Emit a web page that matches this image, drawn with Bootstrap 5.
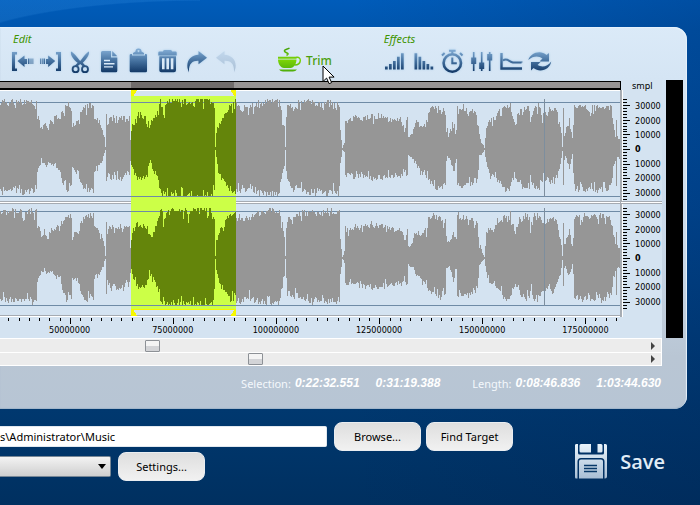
<!DOCTYPE html>
<html lang="en">
<head>
<meta charset="utf-8">
<meta name="viewport" content="width=device-width, initial-scale=1">
<title>Audio editor</title>
<link href="https://cdn.jsdelivr.net/npm/bootstrap@5.3.0/dist/css/bootstrap.min.css" rel="stylesheet">
<style>
body{min-height:100vh;padding-top:27px;font-family:"Noto Sans","Open Sans",sans-serif;font-size:11px;line-height:14px;color:#000;overflow-x:hidden;
 background:radial-gradient(ellipse 260px 60px at 200px 60px,transparent 98%,rgba(70,160,240,.18) 100%) 0 0/200px 27px no-repeat,
 linear-gradient(90deg,transparent 50%,rgba(0,30,80,.22)),linear-gradient(#005cba 0,#0056ae 30px,#004a98 200px,#00386f 410px,#003060 505px)}
.editor{margin-right:13px;border-radius:0 13px 13px 0;background:linear-gradient(#dbeaf8 0,#d5e5f4 50px,#c9d8e8 220px,#b9c6d4 330px,#b7c5d4 100%);box-shadow:inset -1px 1px 1px #e6f2fc,inset 0 -1px 1px #9fb4c9}
.tools{height:53px;padding-left:7px}
.tool-group{padding-top:4px}
.group-title{font-style:italic;color:#3f9400;line-height:16px;margin-left:6px;margin-bottom:1px}
.group-title.fx{margin-left:4px}
.tool{width:29px;height:28px;padding:0;border:0;background:none;line-height:0}
.tool svg{width:29px;height:28px;display:block;overflow:visible;filter:drop-shadow(0 0 1px #a9cdea)}
.trim{margin:19px 48px 0 37px;padding:0;border:0;background:none;color:#4b9f0c;font-size:12px;line-height:16px;font-weight:500;gap:3px;height:30px}
.surface{background:#d4e3f1;margin-right:4px}
.meter{width:17px;background:#000;margin-right:4px}
.overview{height:9px;margin-top:1px;background:#979494;border:solid #000;border-width:1px 1px 2px 0}
.overview svg,.wave,.axis svg{display:block;width:100%}
.scale{width:41px}
.scale-unit{height:10px;font-size:9px;line-height:12px;padding-left:11px}
.numbers{font-family:"DejaVu Sans Condensed","Noto Sans",sans-serif;font-size:9px;line-height:12px}
.wave{height:227px}
.scale-body{height:227px;background:linear-gradient(90deg,#a8aeb5 1px,#fff 1px,#fff 2px,transparent 2px);padding-top:9px}
.scale-channel{height:101px;padding-left:2px}
.scale-channel svg{width:9px;height:101px;display:block}
.scale-nums{display:grid;grid-template-rows:repeat(7,1fr);align-items:center;padding-left:3px}
.scale-nums :nth-child(4){font-weight:600}
.scale-split{margin:1px 0 4px;border:solid #a5abb2;border-width:1px 0;background:#fff;height:3px}
.axis{height:21px}
.axis-nums{display:grid;grid-template-columns:18fr repeat(6,103fr) 25fr;text-align:center;line-height:12px}
.scrolls{margin-right:25px;background:#ececec;border:1px solid #fff;border-left:0}
.scroll-row{height:13px}
.scroll-row+.scroll-row{border-top:1px solid #fff}
.scroll-row input{appearance:none;-webkit-appearance:none;height:12px;margin:0;background:none;min-width:0}
.scroll-row input::-webkit-slider-thumb{-webkit-appearance:none;width:15px;height:12px;border:1px solid #8d9196;border-radius:1px;background:linear-gradient(#f4f4f4 50%,#d3d4d7 50%)}
.scroll-row input::-moz-range-thumb{width:13px;height:10px;border:1px solid #8d9196;border-radius:1px;background:#e4e4e6}
.scroll-arrow{width:16px;padding:0;border:0;background:none;line-height:0}
.status{padding:9px 26px 17px 0;line-height:17px;color:#f4f8fc}
.status b{font-family:"Liberation Sans",sans-serif;font-size:12px;font-style:italic;font-weight:700;color:#fff}
.path-box{height:21px;border:1px solid #e1e8ef;border-left:0;border-radius:0 2px 2px 0;padding:0 0 1px;background:#fff;color:#000;min-width:0}
.format-box{width:111px;height:21px;border:1px solid #778796;border-left:0;border-radius:0 2px 2px 0;appearance:none;-webkit-appearance:none;background:linear-gradient(#f3f3f3,#cfcfcf)}
.format-wrap{position:relative}
.format-wrap svg{position:absolute;right:5px;top:8px;pointer-events:none}
.pill{width:87px;height:29px;padding:0;border:1px solid #e9edf1;border-radius:8px;background:linear-gradient(#dedede,#f1f1f1);font-size:11px;color:#000}
.after-field{margin-left:7px}
.after-pill{margin-left:5px}
.format-row{margin-top:1px}
.bottom{padding-top:13px;margin-right:35px}
.fields{width:513px}
.save{margin-top:22px;padding:0;border:0;background:none;color:#e2edf7;font-size:20px;line-height:28px;font-weight:600;font-family:"Open Sans",sans-serif;gap:13px}
.pointer{position:absolute;left:322px;top:65px;pointer-events:none}
</style>
</head>
<body>
<svg width="0" height="0" class="position-absolute" aria-hidden="true"><defs>
<linearGradient id="ink" gradientUnits="userSpaceOnUse" x1="0" y1="2" x2="0" y2="24"><stop offset="0" stop-color="#7fa9d2"/><stop offset=".5" stop-color="#45719f"/><stop offset="1" stop-color="#143a68"/></linearGradient>
<linearGradient id="leaf" gradientUnits="userSpaceOnUse" x1="0" y1="0" x2="0" y2="25"><stop offset="0" stop-color="#3c9c08"/><stop offset=".5" stop-color="#7ed608"/><stop offset="1" stop-color="#4cab0a"/></linearGradient>
<linearGradient id="steel" x1="0" y1="0" x2="0" y2="1"><stop offset="0" stop-color="#e9f3fb"/><stop offset="1" stop-color="#a9bfd5"/></linearGradient>
</defs></svg>

<main class="editor">
 <div class="tools d-flex align-items-start">
  <div class="tool-group">
   <div class="group-title">Edit</div>
   <div class="d-flex">
    <button class="tool" aria-label="Selection start"><svg viewBox="0 0 29 28" fill="url(#ink)"><path d="M5 4h5v2.500H8V20.500h2V23H5zM10.500 13l7-5.500V11h2.500v5h-2.500v3zM21 10.500h1.500v5.500H21zM23.500 10.500h1v5.500h-1zM25.500 10.500h.8v5.500h-.8z"/></svg></button>
    <button class="tool" aria-label="Selection end"><svg viewBox="0 0 29 28" fill="url(#ink)"><path d="M25 4h-5v2.500h2V20.500h-2V23h5zM19.200 13l-7-5.500V11H10v5h2.200v3zM7.500 10.500H9v5.500H7.500zM5.700 10.500h1v5.500h-1zM4 10.500h.8v5.500H4z"/></svg></button>
    <button class="tool" aria-label="Cut"><svg viewBox="0 0 29 28" fill="url(#ink)"><path d="M6 3.500c2.500 1 6.500 6 9.200 9.500C18 9.500 21.500 4.500 24 3.500c.7 4-3.500 8.500-6.200 11.300l2.700 3-1.500 1.500-3.800-3.300-3.800 3.300-1.600-1.500 2.900-3C9 12 5 7.500 6 3.500z"/><g fill="none" stroke="url(#ink)" stroke-width="1.800"><circle cx="10.600" cy="21.200" r="3"/><circle cx="20" cy="21.200" r="3"/></g></svg></button>
    <button class="tool" aria-label="Copy"><svg viewBox="0 0 29 28"><path fill="url(#ink)" d="M8.500 3H17v6.500h6.300v13.300q0 1.500-1.500 1.500H8.500Q7 24.300 7 22.800V4.500Q7 3 8.500 3zM18.200 3l5.100 5.300h-5.100z"/><path stroke="#dcecfa" stroke-width="1.400" d="M10 12.500h6M10 15.700h10.500M10 18.900h9"/></svg></button>
    <button class="tool" aria-label="Paste"><svg viewBox="0 0 29 28" fill="url(#ink)"><path fill-rule="evenodd" d="M12.500 3.500a3 3 0 0 1 6 0L21 5v1.500H10V5zM15.500 2a1 1 0 1 0 .01 0z"/><path d="M8 6h1v1.500h13V6h1q1 0 1 1v16q0 1.300-1.300 1.300H8q-1.300 0-1.300-1.300V7q0-1 1.300-1z"/></svg></button>
    <button class="tool" aria-label="Delete"><svg viewBox="0 0 29 28"><path fill="url(#ink)" d="M11 3.500Q11 2 12.500 2h6Q20 2 20 3.500h3.500q1.200 0 1.200 1.200V7.500H6.300V4.700q0-1.200 1.200-1.200zM7.300 8.300H24v14q0 2-2 2H9.300q-2 0-2-2z"/><path stroke="#d9e9f7" stroke-width="2.600" d="M11.300 10.300v11M15.700 10.300v11M20.100 10.300v11"/></svg></button>
    <button class="tool" aria-label="Redo"><svg viewBox="0 0 29 28" fill="url(#ink)"><path d="M17.500 3l8.500 6.700-8.500 6.600v-3.600C11 12.500 7.500 16 8 24.500 3.500 15 8.500 7 17.500 6.700z"/></svg></button>
    <button class="tool" aria-label="Undo"><svg viewBox="0 0 29 28" fill="url(#ink)" opacity=".22"><path d="M14.500 3L6 9.700l8.500 6.600v-3.600c6.500-.2 10 3.300 9.500 11.800C28.500 15 23.500 7 14.500 6.700z"/></svg></button>
   </div>
  </div>
  <button class="trim d-flex align-items-center">
   <svg width="27" height="28" viewBox="0 0 27 28" fill="url(#leaf)"><path d="M2 9.700h18.500v2H2zM2 12.600h18.500c0 4-2.500 8.400-6 8.400H8c-3.500 0-6-4.400-6-8.400zM3 22.500h18q-1.500 2-4 2H7q-2.500 0-4-2z"/><path fill="none" stroke="url(#leaf)" stroke-width="1.500" d="M20 10.500c6-1.500 6 7.500-1.500 7.500M10.500 8.500c5-2.500-3-2.500-2-5 .5-1.300 3-1 5-2.500"/></svg>
   <span>Trim</span>
  </button>
  <div class="tool-group">
   <div class="group-title fx">Effects</div>
   <div class="d-flex">
    <button class="tool" aria-label="Fade in"><svg viewBox="0 0 29 28" fill="url(#ink)"><path d="M5 18.500h2.700v3H5zM9 16h2.700v5.500H9zM13 13h2.700v8.500H13zM17 8.700h2.700v12.800H17zM21 5.300h2.700v16.200H21z"/></svg></button>
    <button class="tool" aria-label="Fade out"><svg viewBox="0 0 29 28" fill="url(#ink)"><path d="M5.500 5.300h2.700v16.200H5.500zM9.500 8.700h2.700v12.800H9.500zM13.500 13h2.700v8.500h-2.700zM17.500 16h2.700v5.500h-2.700zM21.500 18.500h2.700v3h-2.700z"/></svg></button>
    <button class="tool" aria-label="Time stretch"><svg viewBox="0 0 29 28" fill="none" stroke="url(#ink)"><circle cx="14.300" cy="15" r="8.700" stroke-width="2.600"/><path stroke-width="2" d="M14.300 9.500v5.800h4.500M11 2.700h6.600M14.300 3v3M22 5l2.500 2.500M6.600 5L4 7.500"/></svg></button>
    <button class="tool" aria-label="Equalizer"><svg viewBox="0 0 29 28" fill="url(#ink)"><path d="M5.900 4h1.600v19H5.900zM13.900 4h1.600v19h-1.600zM21.900 4h1.600v19h-1.600zM4.200 9.500h5V16h-5zM12.200 14.500h5V21h-5zM20.200 6h5v6.500h-5z"/></svg></button>
    <button class="tool" aria-label="Envelope"><svg viewBox="0 0 29 28" fill="none" stroke="url(#ink)"><path stroke-width="2.400" d="M5.500 5v15.500H26"/><path stroke-width="2" d="M7 12.500c4-3 6 1.200 10 2h8.500v.1"/></svg></button>
    <button class="tool" aria-label="Loop"><svg viewBox="0 0 29 28" fill="url(#ink)"><path d="M3.300 12C5 5.500 15 1 21.500 7l2.500-2v8.500h-9.500l3-3C14 7.500 8 7.500 3.300 12zM26.200 13.500c-.7 7.500-11 12-17.700 6.500L6 22.500V14h9.500l-3 3c4 2.500 10 2 13.700-3.500z"/></svg></button>
   </div>
  </div>
 </div>

 <div class="d-flex">
  <div class="surface flex-grow-1">
   <div class="d-flex">
    <div class="flex-grow-1">
     <div class="overview"><svg height="6" viewBox="0 0 620 6" preserveAspectRatio="none"><path fill="#706c6c" d="M131 0h103v6H131z"/></svg></div>
     <svg class="wave" id="wave" viewBox="0 0 620 227" preserveAspectRatio="none" shape-rendering="crispEdges" role="img" aria-label="Stereo waveform"></svg>
    </div>
    <div class="scale">
     <div class="scale-unit">smpl</div>
     <div class="scale-body numbers">
      <div class="scale-channel d-flex"><svg class="vticks" viewBox="0 0 9 101"></svg><div class="scale-nums"><span>30000</span><span>20000</span><span>10000</span><span>0</span><span>10000</span><span>20000</span><span>30000</span></div></div>
      <div class="scale-split"></div>
      <div class="scale-channel d-flex"><svg class="vticks" viewBox="0 0 9 101"></svg><div class="scale-nums"><span>30000</span><span>20000</span><span>10000</span><span>0</span><span>10000</span><span>20000</span><span>30000</span></div></div>
     </div>
    </div>
   </div>
   <div class="axis numbers">
    <svg id="hticks" height="7" viewBox="0 0 661 7" preserveAspectRatio="none" shape-rendering="crispEdges"></svg>
    <div class="axis-nums"><i></i><span>50000000</span><span>75000000</span><span>100000000</span><span>125000000</span><span>150000000</span><span>175000000</span><i></i></div>
   </div>
  </div>
  <div class="meter"></div>
 </div>

 <div class="scrolls">
  <div class="scroll-row d-flex align-items-center"><input class="flex-grow-1" type="range" min="0" max="630" value="145" aria-label="Scroll"><button class="scroll-arrow" aria-label="Scroll right"><svg width="5" height="8"><path fill="#444" d="M0 0l4 4-4 4z"/></svg></button></div>
  <div class="scroll-row d-flex align-items-center"><input class="flex-grow-1" type="range" min="0" max="630" value="248" aria-label="Zoom"><button class="scroll-arrow" aria-label="Zoom in"><svg width="5" height="8"><path fill="#444" d="M0 0l4 4-4 4z"/></svg></button></div>
 </div>
 <div class="status d-flex justify-content-end">
  <span class="me-1">Selection:</span><b class="me-3">0:22:32.551</b><b>0:31:19.388</b>
  <span class="ms-4 me-1 ps-2">Length:</span><b class="me-3">0:08:46.836</b><b>1:03:44.630</b>
 </div>
</main>

<div class="bottom d-flex justify-content-between align-items-start">
 <div class="fields">
  <div class="d-flex align-items-center">
   <input class="path-box flex-grow-1" type="text" value="s\Administrator\Music" aria-label="Target folder">
   <button class="pill after-field">Browse...</button><button class="pill after-pill">Find Target</button>
  </div>
  <div class="format-row d-flex align-items-center">
   <div class="format-wrap"><select class="format-box d-block" aria-label="Format"><option></option></select><svg width="8" height="5"><path d="M0 0h8L4 5z"/></svg></div>
   <button class="pill after-field">Settings...</button>
  </div>
 </div>
 <button class="save d-flex align-items-center">
  <svg width="32" height="35" viewBox="0 0 32 35"><path fill="url(#steel)" d="M1 0h2v9q0 1.500 1.500 1.500h23Q29 10.500 29 9V0h1.500Q32 0 32 1.500v31Q32 34.500 30 34.500h-.5V17.500Q29.500 14 26 14H6q-3.500 0-3.500 3.500v17H1q-1 0-1-1.500V1.500Q0 0 1 0zM6 0h10v8.500H6Q4.500 8.500 4.500 7V1.500Q4.500 0 6 0zM22.500 0H26q1.500 0 1.500 1.500V7q0 1.500-1.500 1.500h-3.500zM6 15.500h20q2 0 2 2v17H4v-17q0-2 2-2z"/><path stroke="#073868" stroke-width="1.500" d="M9 21.500h13M9 24.500h13M9 27.500h13"/></svg>
  <span>Save</span>
 </button>
</div>

<svg class="pointer" width="13" height="20" viewBox="0 0 13 20"><path fill="#fff" stroke="#000" d="M1 1v15.500l3.600-3.400 2.500 5.600 2.500-1.100-2.500-5.500h5z"/></svg>

<script src="https://cdn.jsdelivr.net/npm/bootstrap@5.3.0/dist/js/bootstrap.bundle.min.js"></script>
<script>
// Envelope nodes: position, level above the centre line, level below it.
const env = [[0,47,42],[36,47,42],[37,32,23],[39,31,19],[41,22,11],[44,26,14],[48,21,15],[50,27,14],[55,31,16],[60,33,23],[64,41,37],[66,43,41],[71,41,39],[72,23,21],[78,27,23],[80,35,33],[84,41,41],[90,45,41],[93,41,39],[94,29,21],[98,28,19],[102,19,11],[104,11,4],[105,2,1],[106,37,35],[107,25,25],[110,31,28],[120,31,29],[129,29,26],[130,12,14],[131,20,16],[134,31,25],[138,34,29],[143,32,29],[147,29,25],[149,21,14],[152,27,21],[156,33,26],[158,39,33],[160,47,44],[162,46,45],[163,36,41],[166,44,46],[169,49,47],[185,48,47],[187,43,45],[192,49,47],[210,50,47],[213,43,44],[214,38,37],[215,2,1],[216,17,11],[218,24,21],[222,32,31],[228,41,39],[235,46,43],[236,45,43],[242,39,41],[250,41,41],[258,44,43],[270,48,45],[279,47,44],[281,36,33],[284,21,16],[285,2,1],[286,31,23],[287,43,33],[292,39,41],[296,43,37],[305,48,43],[318,44,42],[325,47,43],[338,46,42],[339,19,16],[341,1,1],[343,6,4],[344,27,26],[350,30,27],[364,32,28],[378,33,30],[385,31,27],[400,28,26],[403,19,21],[406,32,26],[407,11,6],[410,15,9],[415,27,16],[420,24,23],[426,29,27],[427,39,31],[430,41,35],[436,42,39],[444,37,36],[445,19,11],[448,15,9],[452,27,23],[455,17,11],[456,41,36],[462,40,37],[474,38,34],[476,31,28],[478,14,8],[483,1,1],[485,22,15],[488,30,27],[492,29,28],[497,37,31],[503,42,41],[509,42,37],[513,29,26],[520,39,37],[525,43,39],[528,39,39],[529,28,31],[533,43,41],[539,42,39],[541,33,31],[546,35,29],[552,41,35],[556,37,26],[560,14,11],[561,2,2],[562,38,34],[563,14,12],[564,16,9],[568,29,19],[571,11,6],[573,41,39],[578,41,41],[600,42,41],[610,41,38],[612,24,21],[614,13,11],[615,28,36],[616,12,9],[620,10,9]];
let seed = 7;
const rnd = () => (seed = (seed * 16807) % 2147483647) / 2147483647;
const level = (x, k) => {
  const i = Math.max(1, env.findIndex(n => n[0] >= x)), a = env[i - 1], b = env[i];
  return a[k] + (b[k] - a[k]) * (x - a[0]) / (b[0] - a[0]);
};
const jag = v => Math.round(Math.min(50, v + (rnd() - .5) * Math.min(6, v / 3) - (rnd() < .15 ? v * .14 : 0) + (rnd() < .1 ? v * .06 : 0)));
let plain = '', picked = '';
for (const mid of [59, 168]) for (let x = 0; x < 620; x++) {
  const up = jag(level(x, 1)), down = Math.min(47, jag(level(x, 2)));
  const bar = `M${x} ${mid - up}h1V${mid + down}h-1z`;
  if (x >= 131 && x < 236) picked += bar; else plain += bar;
}
document.getElementById('wave').innerHTML =
 `<path fill="#fff" d="M0 0h620v1H0zM0 112h620v1H0zM0 226h620v1H0z"/>
  <path fill="#a5abb2" d="M0 111h620v1H0zM0 113h620v1H0zM0 225h620v1H0z"/>
  <path fill="#ccff47" d="M131 6h105v213H131z"/>
  <path fill="#f6f800" d="M131 0h6l-4 6h-2zM236 0h-6l4 6h2zM131 226h6l-4-6h-2zM236 226h-6l4-6h2zM131 219h105v1H131z"/>
  <path fill="#6f8ba6" d="M0 12h620v1H0zM0 106h620v1H0zM0 121h620v1H0zM0 215h620v1H0z"/>
  <path fill="#969696" d="${plain}"/><path fill="#64850b" d="${picked}"/>
  <path fill="#7d8e9e" d="M543 9h1v98h-1zM543 118h1v98h-1z"/>
  <path fill="#a5abb2" d="M619 0h1v227h-1z"/>`;
let v = '';
for (let i = -17; i <= 17; i++) v += `M0 ${Math.round(50 + i * 2.92)}h${i % 5 ? 4 : 7}v1H0z`;
document.querySelectorAll('.vticks').forEach(s => s.innerHTML = `<path d="${v}"/>`);
let h = '';
for (let i = -6; i <= 53; i++) h += `M${Math.round(70 + i * 10.28)} 1h1v${i % 10 ? 3 : 6}h-1z`;
document.getElementById('hticks').innerHTML = `<path d="${h}"/>`;
</script>
</body>
</html>
